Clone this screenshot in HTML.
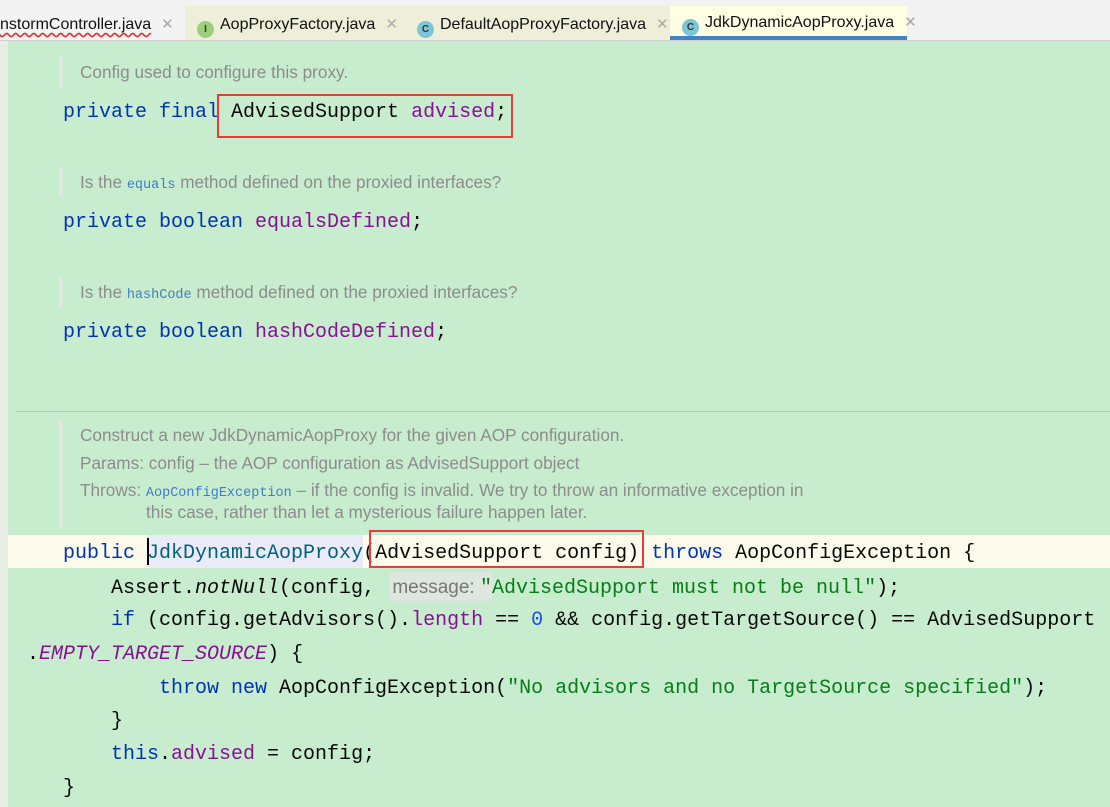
<!DOCTYPE html>
<html><head><meta charset="utf-8"><style>
*{margin:0;padding:0;box-sizing:border-box}
body{width:1110px;height:807px;overflow:hidden;background:#c8ecce;position:relative;font-family:"Liberation Sans",sans-serif}
.tabs{position:absolute;left:0;top:0;width:1110px;height:41px;background:#f2f2f2;border-bottom:1px solid #d0d0d0}
.tab{position:absolute;top:6px;height:34px;font-size:16px;color:#111;line-height:38px;white-space:nowrap}
.x{color:#aaa;margin-left:10px;font-size:15px}
.ic{display:inline-block;width:17px;height:17px;border-radius:50%;vertical-align:-3px;margin-right:6px;font-size:10px;line-height:17px;text-align:center;font-weight:bold;color:#333}
.gut{position:absolute;left:0;top:41px;width:8px;height:766px;background:#e6ece6}
.c{position:absolute;font-family:"Liberation Mono",monospace;font-size:20px;white-space:pre;color:#080808;line-height:30px;font-weight:500}
.k{color:#0033b3}.f{color:#871094}.s{color:#067d17}.n{color:#1750eb}
.d{position:absolute;left:80px;font-size:17.2px;color:#8c8c8c;white-space:pre;line-height:22px}
.dm{font-family:"Liberation Mono",monospace;font-size:13.5px;color:#3d7ec8}
.bar{position:absolute;left:59px;width:4px;background:#dfe8df}
.red{position:absolute;border:2px solid #f03a3a}
</style></head><body>
<div class="tabs">
<div class="tab" style="left:0;width:185px;background:#f3f3f3;padding-left:0"><span style="text-decoration:underline wavy #e03030;text-underline-offset:3px">nstormController.java</span><span class="x">✕</span></div>
<div class="tab" style="left:185px;width:220px;background:#eeeed9;padding-left:12px"><span class="ic" style="background:#9ccf7c">I</span>AopProxyFactory.java<span class="x">✕</span></div>
<div class="tab" style="left:405px;width:265px;background:#eeeed9;padding-left:12px"><span class="ic" style="background:#7cc6d8">C</span>DefaultAopProxyFactory.java<span class="x">✕</span></div>
<div class="tab" style="left:670px;width:237px;background:#fefee2;padding-left:12px;border-bottom:4px solid #4083c9;line-height:34px"><span class="ic" style="background:#7cc6d8">C</span>JdkDynamicAopProxy.java<span class="x">✕</span></div>
</div>
<div class="gut"></div>

<div class="bar" style="top:57px;height:30px"></div>
<div class="d" style="top:61px">Config used to configure this proxy.</div>
<div class="c" style="left:63px;top:98px"><span class="k">private final </span>AdvisedSupport <span class="f">advised</span>;</div>
<div class="red" style="left:217px;top:94px;width:296px;height:44px"></div>

<div class="bar" style="top:167px;height:30px"></div>
<div class="d" style="top:171px">Is the <span class="dm">equals</span> method defined on the proxied interfaces?</div>
<div class="c" style="left:63px;top:208px"><span class="k">private boolean </span><span class="f">equalsDefined</span>;</div>

<div class="bar" style="top:277px;height:30px"></div>
<div class="d" style="top:281px">Is the <span class="dm">hashCode</span> method defined on the proxied interfaces?</div>
<div class="c" style="left:63px;top:318px"><span class="k">private boolean </span><span class="f">hashCodeDefined</span>;</div>

<div style="position:absolute;left:16px;top:411px;width:1094px;height:1px;background:#b8c8b8"></div>
<div class="bar" style="top:420px;height:108px"></div>
<div class="d" style="top:424px">Construct a new JdkDynamicAopProxy for the given AOP configuration.</div>
<div class="d" style="top:452px">Params: config – the AOP configuration as AdvisedSupport object</div>
<div class="d" style="top:479px">Throws: <span class="dm">AopConfigException</span> – if the config is invalid. We try to throw an informative exception in</div>
<div class="d" style="top:501px;left:146px">this case, rather than let a mysterious failure happen later.</div>

<div style="position:absolute;left:8px;top:535px;width:1102px;height:33px;background:#fcfaea"></div>
<div style="position:absolute;left:147px;top:535px;width:216px;height:33px;background:#ebeaf8"></div>
<div style="position:absolute;left:147px;top:538px;width:2px;height:27px;background:#000"></div>
<div class="c" style="left:63px;top:539px"><span class="k">public </span><span style="color:#00627a">JdkDynamicAopProxy</span>(AdvisedSupport config) <span class="k">throws </span>AopConfigException {</div>
<div class="red" style="left:369px;top:530px;width:275px;height:38px"></div>
<div style="position:absolute;left:389px;top:572px;width:104px;height:29px;background:#dfe6df;border-radius:4px"></div>
<div class="c" style="left:111px;top:573px">Assert.<i>notNull</i>(config, <span style="font-family:'Liberation Sans',sans-serif;color:#777;font-size:19px;font-weight:400"> message: </span><span class="s">"AdvisedSupport must not be null"</span>);</div>
<div class="c" style="left:111px;top:606px"><span class="k">if </span>(config.getAdvisors().<span class="f">length</span> == <span class="n">0</span> &amp;&amp; config.getTargetSource() == AdvisedSupport</div>
<div class="c" style="left:27px;top:640px">.<i class="f">EMPTY_TARGET_SOURCE</i>) {</div>
<div class="c" style="left:159px;top:674px"><span class="k">throw new </span>AopConfigException(<span class="s">"No advisors and no TargetSource specified"</span>);</div>
<div class="c" style="left:111px;top:707px">}</div>
<div class="c" style="left:111px;top:740px"><span class="k">this</span>.<span class="f">advised</span> = config;</div>
<div class="c" style="left:63px;top:774px">}</div>
</body></html>
